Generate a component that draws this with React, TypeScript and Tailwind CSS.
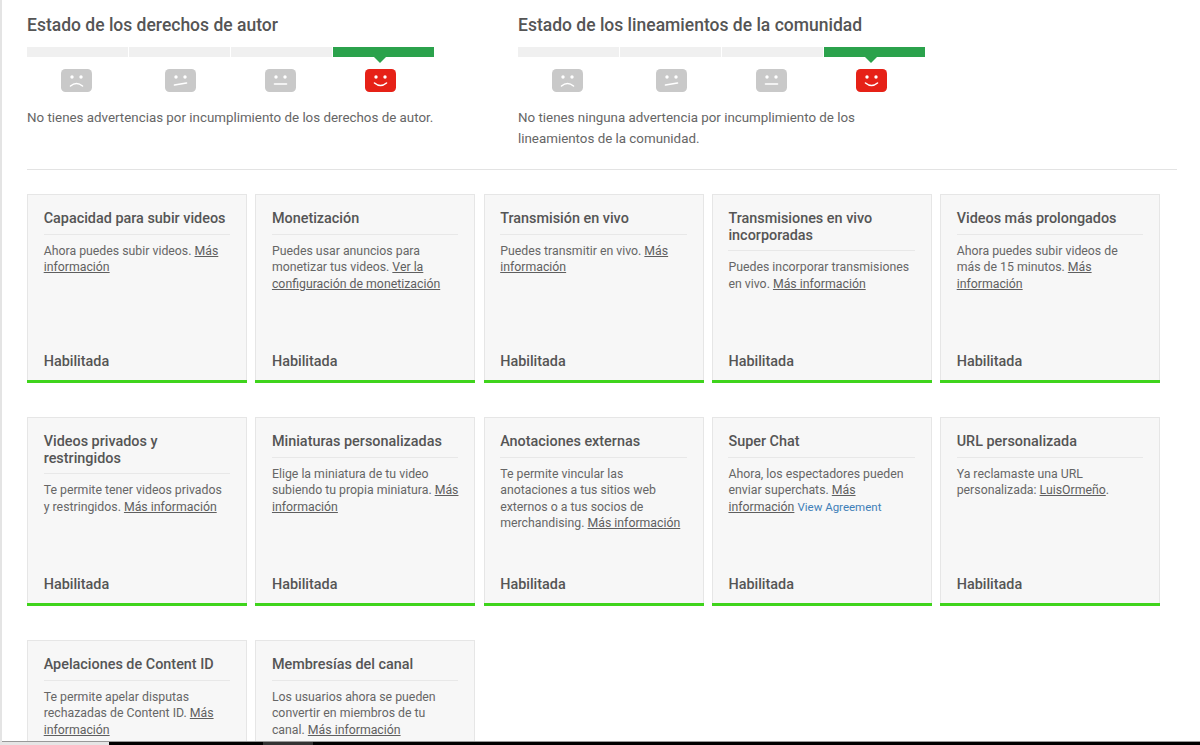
const faces = [
  { mouth: 'M-6 5.5 Q0 0.5 6 5.5', gap: 'mr-[2px]' },
  { mouth: 'M-6 4.5 L6 2.5', gap: 'ml-[2px]' },
  { mouth: 'M-6 3.5 L6 3.5', gap: 'mr-[2px]' },
  { mouth: 'M-6 2.5 Q0 7.5 6 2.5', gap: 'mr-[6px]' },
];

const cards = [
  { title: 'Capacidad para subir videos', body: <>Ahora puedes subir videos. <L>Más información</L></> },
  { title: 'Monetización', body: <>Puedes usar anuncios para monetizar tus videos. <L>Ver la configuración de monetización</L></> },
  { title: 'Transmisión en vivo', body: <>Puedes transmitir en vivo. <L>Más información</L></> },
  { title: 'Transmisiones en vivo incorporadas', body: <>Puedes incorporar transmisiones en vivo. <L>Más información</L></> },
  { title: 'Videos más prolongados', body: <>Ahora puedes subir videos de<br />más de 15 minutos. <L>Más información</L></> },
  { title: 'Videos privados y restringidos', body: <>Te permite tener videos privados<br />y restringidos. <L>Más información</L></> },
  { title: 'Miniaturas personalizadas', body: <>Elige la miniatura de tu video subiendo tu propia miniatura. <L>Más información</L></> },
  { title: 'Anotaciones externas', body: <>Te permite vincular las anotaciones a tus sitios web externos o a tus socios de merchandising. <L>Más información</L></> },
  { title: 'Super Chat', body: <>Ahora, los espectadores pueden enviar superchats. <L>Más información</L> <Agreement /></> },
  { title: 'URL personalizada', body: <>Ya reclamaste una URL personalizada: <L>LuisOrmeño</L>.</> },
  { title: 'Apelaciones de Content ID', body: <>Te permite apelar disputas rechazadas de Content ID. <L>Más información</L></> },
  { title: 'Membresías del canal', body: <>Los usuarios ahora se pueden convertir en miembros de tu canal. <L>Más información</L> <Agreement /></> },
];

function L({ children }: { children: React.ReactNode }) {
  return <a className="underline text-[#5f5f5f]">{children}</a>;
}

function Agreement() {
  return <span className="whitespace-nowrap text-[11.5px] text-[#3f7fb8]">View Agreement</span>;
}

function Face({ mouth, active }: { mouth: string; active: boolean }) {
  return (
    <svg width="31" height="23" viewBox="-15.5 -11.5 31 23">
      <rect x="-15.5" y="-11.5" width="31" height="23" rx="4.5" fill={active ? '#e62117' : '#c9c9c9'} />
      <circle cx="-4.5" cy="-3.5" r="1.7" fill="#fff" />
      <circle cx="4.5" cy="-3.5" r="1.7" fill="#fff" />
      <path d={mouth} fill="none" stroke="#fff" strokeWidth="1.6" strokeLinecap="round" />
    </svg>
  );
}

function Status({ title, text, className, textWidth }: { title: string; text: string; className: string; textWidth: string }) {
  return (
    <div className={className}>
      <h2 className="text-[17.5px] leading-[24px] font-medium text-[#555] whitespace-nowrap">{title}</h2>
      <div className="mt-[10px] flex w-[407px] gap-px">
        {faces.map((f, i) => (
          <div key={i} className="flex-1 flex flex-col items-center relative">
            <div className={`h-[10px] w-full ${i === 3 ? 'bg-[#2ba24c]' : 'bg-[#f0f0f0]'}`} />
            {i === 3 && (
              <div className="absolute top-[10px] left-[41px] w-0 h-0 border-x-[6px] border-x-transparent border-t-[6px] border-t-[#2ba24c]" />
            )}
            <div className={`mt-[12px] h-[23px] ${f.gap}`}>
              <Face mouth={f.mouth} active={i === 3} />
            </div>
          </div>
        ))}
      </div>
      <p className={`mt-[15px] text-[13.35px] leading-[21px] text-[#666] ${textWidth}`}>{text}</p>
    </div>
  );
}

export default function App() {
  return (
    <div className="relative h-[745px] overflow-hidden bg-white border-l-2 border-[#e4e4e4] font-['Roboto',sans-serif]">
      <div className="pl-[25px] pr-[23px] pt-[13px]">
        <div className="flex h-[157px] border-b border-[#e3e3e3]">
          <Status className="w-[491px]" textWidth="max-w-[420px]" title="Estado de los derechos de autor" text="No tienes advertencias por incumplimiento de los derechos de autor." />
          <Status className="w-[420px]" textWidth="max-w-[350px]" title="Estado de los lineamientos de la comunidad" text="No tienes ninguna advertencia por incumplimiento de los lineamientos de la comunidad." />
        </div>
        <div className="mt-[24px] grid grid-cols-[220px_220px_220px_220px_220px] gap-x-[8.25px] gap-y-[34px]">
          {cards.map((c) => (
            <div key={c.title} className="h-[189px] flex flex-col bg-[#f7f7f7] border border-[#e6e6e6] border-b-0">
              <div className="ml-[15.7px] mr-[16px] pt-[16px] pb-[6px] border-b border-[#e8e8e8] text-[14.4px] leading-[16.5px] font-medium text-[#555]">{c.title}</div>
              <div className="ml-[15.7px] mr-[14px] mt-[8px] text-[12.3px] leading-[16.5px] text-[#666]">{c.body}</div>
              <div className="mt-auto ml-[15.7px] mb-[10px] text-[14.4px] leading-[17px] font-medium text-[#555]">Habilitada</div>
              <div className="-mx-px h-[3px] bg-[#3fd41c]" />
            </div>
          ))}
        </div>
      </div>
      <div className="absolute bottom-0 -left-[2px] right-0 h-[4px] flex border-t border-[#999]">
        <div className="w-[109px] bg-[#e6e6e6]" />
        <div className="w-[154px] bg-black" />
        <div className="w-[50px] bg-[#333]" />
        <div className="flex-1 bg-black" />
      </div>
    </div>
  );
}
